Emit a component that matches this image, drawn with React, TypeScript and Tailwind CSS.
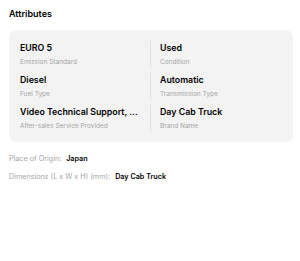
const attrs = [
  { value: 'EURO 5', label: 'Emission Standard' },
  { value: 'Used', label: 'Condition' },
  { value: 'Diesel', label: 'Fuel Type' },
  { value: 'Automatic', label: 'Transmission Type' },
  { value: 'Video Technical Support, Online Support', label: 'After-sales Service Provided' },
  { value: 'Day Cab Truck', label: 'Brand Name' },
]

const extra = [
  { label: 'Place of Origin:', value: 'Japan' },
  { label: 'Dimensions (L x W x H) (mm):', value: 'Day Cab Truck' },
]

export default function App() {
  return (
    <div className="w-[300px] h-[261px] bg-white px-[9px] pt-[8px] font-['Inter',sans-serif] text-black">
      <h2 className="text-[9px] font-semibold leading-[12px]">Attributes</h2>

      <div className="mt-[10px] w-[284px] rounded-[7px] bg-[#f3f3f3] px-[11px] pt-[11px] pb-[11px] grid grid-cols-2 gap-y-[6px]">
        {attrs.map((a, i) => (
          <div
            key={a.label}
            className={`min-w-0 ${i % 2 === 0 ? 'pr-[10px] border-r border-[#e2e2e2]' : 'pl-[9px]'}`}
          >
            <div className="truncate text-[8.8px] font-semibold leading-[14px]">{a.value}</div>
            <div className="truncate text-[6.5px] leading-[10px] mt-[2px] text-[#a6a6a6]">{a.label}</div>
          </div>
        ))}
      </div>

      <div className="mt-[12px] flex flex-col gap-[8px]">
        {extra.map((e) => (
          <div key={e.label} className="flex items-center gap-[5px] text-[7.2px] leading-[10px]">
            <span className="text-[#a6a6a6]">{e.label}</span>
            <span className="font-semibold">{e.value}</span>
          </div>
        ))}
      </div>
    </div>
  )
}
